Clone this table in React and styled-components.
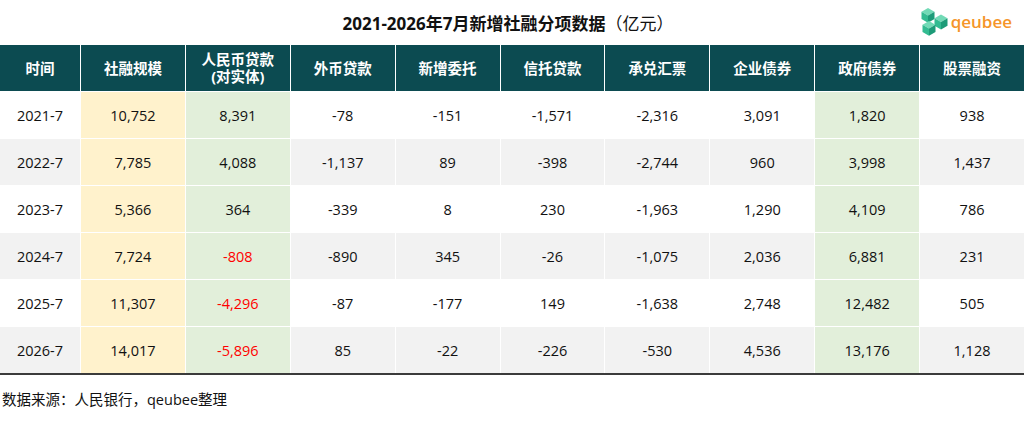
import React from 'react'
import styled, { createGlobalStyle } from 'styled-components'

const GlobalStyle = createGlobalStyle`
  html, body {
    margin: 0;
    padding: 0;
    background: #ffffff;
  }
  body {
    font-family: 'Open Sans', 'Noto Sans CJK SC', sans-serif;
    color: #111;
  }
`

const headers = [
  ['时间'],
  ['社融规模'],
  ['人民币贷款', '(对实体)'],
  ['外币贷款'],
  ['新增委托'],
  ['信托贷款'],
  ['承兑汇票'],
  ['企业债券'],
  ['政府债券'],
  ['股票融资'],
]

const rows = [
  ['2021-7', '10,752', '8,391', '-78', '-151', '-1,571', '-2,316', '3,091', '1,820', '938'],
  ['2022-7', '7,785', '4,088', '-1,137', '89', '-398', '-2,744', '960', '3,998', '1,437'],
  ['2023-7', '5,366', '364', '-339', '8', '230', '-1,963', '1,290', '4,109', '786'],
  ['2024-7', '7,724', '-808', '-890', '345', '-26', '-1,075', '2,036', '6,881', '231'],
  ['2025-7', '11,307', '-4,296', '-87', '-177', '149', '-1,638', '2,748', '12,482', '505'],
  ['2026-7', '14,017', '-5,896', '85', '-22', '-226', '-530', '4,536', '13,176', '1,128'],
]

// which columns carry a highlight colour
const tints = { 1: 'yellow', 2: 'green', 8: 'green' }
const tintColors = { yellow: '#fff2cc', green: '#e2efda' }

const Page = styled.div`
  width: 1024px;
  height: 423px;
  display: flex;
  flex-direction: column;
`

const TitleBar = styled.div`
  position: relative;
  height: 45px;
  display: flex;
  align-items: center;
  justify-content: center;
`

const Title = styled.h1`
  margin: 0;
  padding-right: 8px;
  font-family: 'Open Sans', 'Noto Sans CJK SC', sans-serif;
  font-size: 17px;
  font-weight: 700;
  color: #111;
`

const Unit = styled.span`
  font-weight: 400;
`

const Logo = styled.div`
  position: absolute;
  right: 12px;
  top: 8px;
  display: flex;
  align-items: center;
  gap: 3px;
`

const LogoText = styled.span`
  font-family: 'Open Sans', sans-serif;
  font-size: 17px;
  font-weight: 600;
  color: #f5952a;
  line-height: 1;
  margin-top: -2px;
`

const Grid = styled.div`
  display: grid;
  grid-template-columns: 80px repeat(9, 1fr);
  grid-auto-rows: 46px;
  gap: 1px;
  background: #ffffff;
  border-bottom: 2px solid #3b3b3b;
`

const HeadCell = styled.div`
  background: #0c4b51;
  color: #ffffff;
  font-weight: 700;
  font-size: 14.5px;
  line-height: 17px;
  display: flex;
  flex-direction: column;
  align-items: center;
  justify-content: center;
  text-align: center;
`

const Cell = styled.div`
  background: ${p => (p.$tint ? tintColors[p.$tint] : p.$striped ? '#f2f2f2' : '#ffffff')};
  color: ${p => (p.$negative ? '#ff0000' : '#111111')};
  font-size: 14.5px;
  display: flex;
  align-items: center;
  justify-content: center;
`

const Source = styled.div`
  padding: 13px 0 0 2px;
  font-size: 14.5px;
  color: #111;
`

const CubeMark = () => {
  const cube = (x, y) => (
    <g transform={`translate(${x} ${y})`}>
      <polygon points="6.5,0 13,3.7 6.5,7.4 0,3.7" fill="#72dab6" />
      <polygon points="0,3.7 6.5,7.4 6.5,14.8 0,11.1" fill="#33bb91" />
      <polygon points="13,3.7 13,11.1 6.5,14.8 6.5,7.4" fill="#1d9b78" />
    </g>
  )
  return (
    <svg width="27" height="28" viewBox="0 0 27 28">
      {cube(0.5, 0)}
      {cube(13.5, 6.6)}
      {cube(1.5, 13)}
    </svg>
  )
}

export default function App() {
  return (
    <>
      <GlobalStyle />
      <Page>
        <TitleBar>
          <Title>
            2021-2026年7月新增社融分项数据<Unit>（亿元）</Unit>
          </Title>
          <Logo>
            <CubeMark />
            <LogoText>qeubee</LogoText>
          </Logo>
        </TitleBar>
        <Grid>
          {headers.map((lines, i) => (
            <HeadCell key={i}>
              {lines.map(l => (
                <span key={l}>{l}</span>
              ))}
            </HeadCell>
          ))}
          {rows.map((row, r) =>
            row.map((v, c) => (
              <Cell
                key={`${r}-${c}`}
                $tint={tints[c]}
                $striped={r % 2 === 1}
                $negative={c === 2 && v.startsWith('-')}
              >
                {v}
              </Cell>
            ))
          )}
        </Grid>
        <Source>数据来源：人民银行，qeubee整理</Source>
      </Page>
    </>
  )
}
